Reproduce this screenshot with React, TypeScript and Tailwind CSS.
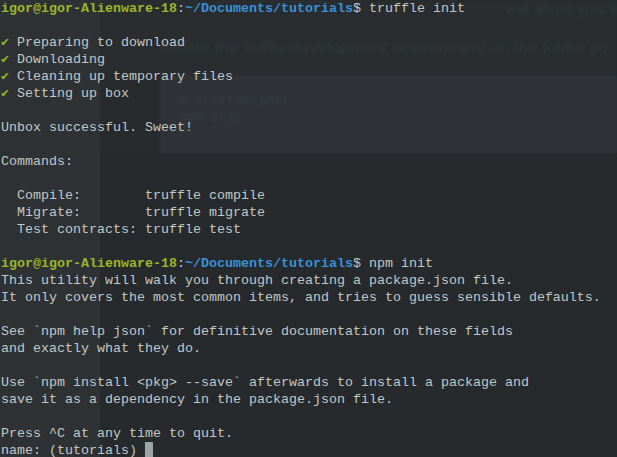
import React from 'react';

const mono = "font-['Liberation_Mono','DejaVu_Sans_Mono',monospace]";

const Prompt: React.FC<{ cmd: string }> = ({ cmd }) => (
  <div>
    <span className="font-bold text-[#9cb629]">igor@igor-Alienware-18</span>
    <span className="text-[#c3c7c7]">:</span>
    <span className="font-bold text-[#3b8fd5]">~/Documents/tutorials</span>
    <span className="text-[#c3c7c7]">$ {cmd}</span>
  </div>
);

const Check: React.FC<{ text: string }> = ({ text }) => (
  <div>
    <span className="text-[#8fb32a]">✔</span> {text}
  </div>
);

const Blank = () => <div>&nbsp;</div>;

export default function App() {
  return (
    <div className="relative w-[617px] h-[457px] overflow-hidden bg-[#272b2e]">
      {/* page seen through the terminal */}
      <div className="flex h-full">
        <div className="w-[100px] bg-[#2e3235]" />
        <div className="flex-1 flex flex-col overflow-hidden">
          <div className="h-[75px] bg-[#292d30] flex flex-col whitespace-nowrap font-['Liberation_Sans',sans-serif] text-[17px] text-[#33383b] blur-[1px]">
            <div className="pl-[405px] leading-[17px]">will allow you to create</div>
            <div className="pl-[60px] pt-[22px] leading-[17px]">Initiate the truffle development environment on the folder yo</div>
          </div>
          <div className="ml-[60px] h-[78px] bg-[#2f3337] flex flex-col whitespace-nowrap pl-[20px] pt-[17px] text-[#393e42] blur-[1px]">
            <div className={`${mono} text-[13px] leading-[17px]`}>$ truffle init</div>
            <div className={`${mono} text-[13px] leading-[17px]`}>  npm init</div>
          </div>
          <div className="flex-1 bg-[#262a2d]" />
        </div>
      </div>

      {/* terminal */}
      <div className={`absolute inset-0 pl-[1px] ${mono} text-[13.33px] leading-[17px] text-[#c3c7c7] whitespace-pre`}>
        <Prompt cmd="truffle init" />
        <Blank />
        <Check text="Preparing to download" />
        <Check text="Downloading" />
        <Check text="Cleaning up temporary files" />
        <Check text="Setting up box" />
        <Blank />
        <div>Unbox successful. Sweet!</div>
        <Blank />
        <div>Commands:</div>
        <Blank />
        <div>  Compile:        truffle compile</div>
        <div>  Migrate:        truffle migrate</div>
        <div>  Test contracts: truffle test</div>
        <Blank />
        <Prompt cmd="npm init" />
        <div>This utility will walk you through creating a package.json file.</div>
        <div>It only covers the most common items, and tries to guess sensible defaults.</div>
        <Blank />
        <div>See `npm help json` for definitive documentation on these fields</div>
        <div>and exactly what they do.</div>
        <Blank />
        <div>Use `npm install &lt;pkg&gt; --save` afterwards to install a package and</div>
        <div>save it as a dependency in the package.json file.</div>
        <Blank />
        <div>Press ^C at any time to quit.</div>
        <div className="flex items-center">
          <span>name: (tutorials) </span>
          <span className="inline-block w-[8px] h-[17px] bg-[#9aa4a4]" />
        </div>
      </div>
    </div>
  );
}
